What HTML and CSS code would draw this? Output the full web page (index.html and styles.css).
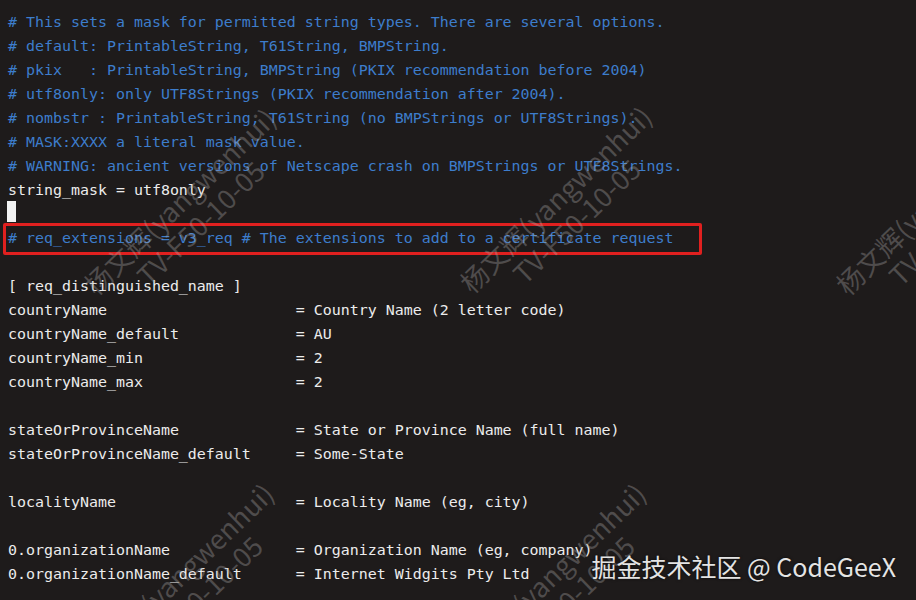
FILE: index.html
```html
<!DOCTYPE html>
<html>
<head>
<meta charset="utf-8">
<link rel="stylesheet" href="styles.css">
</head>
<body>
<div class="term">
<div class="line c"># This sets a mask for permitted string types. There are several options.</div>
<div class="line c"># default: PrintableString, T61String, BMPString.</div>
<div class="line c"># pkix   : PrintableString, BMPString (PKIX recommendation before 2004)</div>
<div class="line c"># utf8only: only UTF8Strings (PKIX recommendation after 2004).</div>
<div class="line c"># nombstr : PrintableString, T61String (no BMPStrings or UTF8Strings).</div>
<div class="line c"># MASK:XXXX a literal mask value.</div>
<div class="line c"># WARNING: ancient versions of Netscape crash on BMPStrings or UTF8Strings.</div>
<div class="line">string_mask = utf8only</div>
<div class="line"><span class="cursor"></span></div>
<div class="line c hl"># req_extensions = v3_req # The extensions to add to a certificate request</div>
<div class="line"> </div>
<div class="line">[ req_distinguished_name ]</div>
<div class="line">countryName                     = Country Name (2 letter code)</div>
<div class="line">countryName_default             = AU</div>
<div class="line">countryName_min                 = 2</div>
<div class="line">countryName_max                 = 2</div>
<div class="line"> </div>
<div class="line">stateOrProvinceName             = State or Province Name (full name)</div>
<div class="line">stateOrProvinceName_default     = Some-State</div>
<div class="line"> </div>
<div class="line">localityName                    = Locality Name (eg, city)</div>
<div class="line"> </div>
<div class="line">0.organizationName              = Organization Name (eg, company)</div>
<div class="line">0.organizationName_default      = Internet Widgits Pty Ltd</div>
</div>

<div class="wm wm-a"><div>杨文辉(yangwenhui)</div><div>TV-F50-10-05</div></div>
<div class="wm wm-b"><div>杨文辉(yangwenhui)</div><div>TV-F50-10-05</div></div>
<div class="wm wm-c"><div>杨文辉(yangwenhui)</div><div>TV-F50-10-05</div></div>
<div class="wm wm-d"><div>杨文辉(yangwenhui)</div><div>TV-F50-10-05</div></div>
<div class="wm wm-e"><div>杨文辉(yangwenhui)</div><div>TV-F50-10-05</div></div>

<div class="brand">掘金技术社区 @ CodeGeeX</div>
</body>
</html>
```

FILE: styles.css
```css
html, body {
  margin: 0;
  padding: 0;
  background: #1e1b1b;
  width: 916px;
  height: 600px;
  overflow: hidden;
}
body {
  position: relative;
}
.term {
  padding: 10px 0 0 8px;
  font-family: "DejaVu Sans Mono", "Liberation Mono", monospace;
  font-size: 14.95px;
  line-height: 24px;
  color: #ececec;
}
.line {
  white-space: pre;
  height: 24px;
  position: relative;
}
.c {
  color: #3d7dcc;
}
.cursor {
  display: inline-block;
  width: 9px;
  height: 21px;
  background: #f2f2f2;
  vertical-align: top;
  margin-top: -1px;
  margin-left: -1px;
}
.hl::after {
  content: "";
  position: absolute;
  left: -5px;
  top: -3px;
  width: 693px;
  height: 26px;
  border: 3px solid #e0201f;
  border-radius: 2px;
}
.wm {
  position: absolute;
  font-family: "Noto Sans CJK SC", "Noto Sans", sans-serif;
  font-size: 27px;
  line-height: 30px;
  color: rgba(175, 172, 172, 0.34);
  text-align: center;
  white-space: nowrap;
  transform: translate(-50%, -50%) rotate(-44deg);
  pointer-events: none;
}
.wm-a { left: 190px; top: 212px; }
.wm-b { left: 566px; top: 210px; }
.wm-c { left: 942px; top: 212px; }
.wm-d { left: 188px; top: 587px; }
.wm-e { left: 560px; top: 587px; }
.brand {
  position: absolute;
  right: 20px;
  top: 549px;
  font-family: "Noto Sans CJK SC", "Noto Sans", sans-serif;
  font-size: 25px;
  line-height: 34px;
  color: #e4e4e4;
  text-shadow: 0 0 3px rgba(0, 0, 0, 0.7);
  white-space: nowrap;
}
```
